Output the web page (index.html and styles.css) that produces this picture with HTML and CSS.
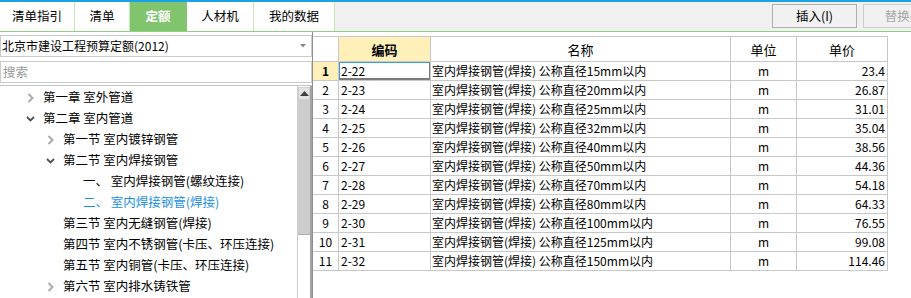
FILE: index.html
```html
<!DOCTYPE html>
<html lang="zh-CN">
<head>
<meta charset="utf-8">
<title>定额</title>
<link rel="stylesheet" href="styles.css">
</head>
<body>
<div class="topline"></div>
<div class="toolbar">
  <div class="tab w1">清单指引</div>
  <div class="tab w2">清单</div>
  <div class="tab w3 active">定额</div>
  <div class="tab w4">人材机</div>
  <div class="tab w5">我的数据</div>
  <div class="btns">
    <div class="btn">插入(I)</div>
    <div class="btn disabled">替换(R)</div>
  </div>
</div>
<div class="main">
  <div class="left">
    <div class="combo">
      <span class="combo-text">北京市建设工程预算定额(2012)</span>
      <svg class="combo-arrow" width="6" height="4" viewBox="0 0 6 4"><polygon points="0,0 6,0 3,3.5" fill="#8a8a8a"/></svg>
    </div>
    <div class="search">搜索</div>
    <div class="tree">
      <div class="tree-list">
        <div class="node l1"><span class="arrow"><svg class="chev-r" width="7" height="10" viewBox="0 0 7 10"><polyline points="1.5,1 5.5,5 1.5,9" fill="none" stroke="#ababab" stroke-width="2"/></svg></span>第一章 室外管道</div>
        <div class="node l1"><span class="arrow"><svg class="chev-d" width="9" height="6" viewBox="0 0 9 6"><polyline points="1,1 4.5,4.5 8,1" fill="none" stroke="#505050" stroke-width="1.8"/></svg></span>第二章 室内管道</div>
        <div class="node l2"><span class="arrow"><svg class="chev-r" width="7" height="10" viewBox="0 0 7 10"><polyline points="1.5,1 5.5,5 1.5,9" fill="none" stroke="#ababab" stroke-width="2"/></svg></span>第一节 室内镀锌钢管</div>
        <div class="node l2"><span class="arrow"><svg class="chev-d" width="9" height="6" viewBox="0 0 9 6"><polyline points="1,1 4.5,4.5 8,1" fill="none" stroke="#505050" stroke-width="1.8"/></svg></span>第二节 室内焊接钢管</div>
        <div class="node l3">一、 室内焊接钢管(螺纹连接)</div>
        <div class="node l3 current">二、 室内焊接钢管(焊接)</div>
        <div class="node l2"><span class="arrow"></span>第三节 室内无缝钢管(焊接)</div>
        <div class="node l2"><span class="arrow"></span>第四节 室内不锈钢管(卡压、环压连接)</div>
        <div class="node l2"><span class="arrow"></span>第五节 室内铜管(卡压、环压连接)</div>
        <div class="node l2"><span class="arrow"><svg class="chev-r" width="7" height="10" viewBox="0 0 7 10"><polyline points="1.5,1 5.5,5 1.5,9" fill="none" stroke="#ababab" stroke-width="2"/></svg></span>第六节 室内排水铸铁管</div>
      </div>
      <div class="vscroll">
        <div class="sb-up"><svg width="9" height="5" viewBox="0 0 9 5"><polygon points="0,5 9,5 4.5,0" fill="#404040"/></svg></div>
        <div class="sb-thumb"></div>
        <div class="sb-track"></div>
      </div>
    </div>
  </div>
  <div class="right">
    <table class="grid">
      <colgroup>
        <col class="c-no"><col class="c-code"><col class="c-name"><col class="c-unit"><col class="c-price">
      </colgroup>
      <thead>
        <tr>
          <th></th>
          <th class="hl">编码</th>
          <th>名称</th>
          <th>单位</th>
          <th>单价</th>
        </tr>
      </thead>
      <tbody>
        <tr><td class="no cur">1</td><td class="code sel">2-22</td><td class="name">室内焊接钢管(焊接) 公称直径15mm以内</td><td class="unit">m</td><td class="price">23.4</td></tr>
        <tr><td class="no">2</td><td class="code">2-23</td><td class="name">室内焊接钢管(焊接) 公称直径20mm以内</td><td class="unit">m</td><td class="price">26.87</td></tr>
        <tr><td class="no">3</td><td class="code">2-24</td><td class="name">室内焊接钢管(焊接) 公称直径25mm以内</td><td class="unit">m</td><td class="price">31.01</td></tr>
        <tr><td class="no">4</td><td class="code">2-25</td><td class="name">室内焊接钢管(焊接) 公称直径32mm以内</td><td class="unit">m</td><td class="price">35.04</td></tr>
        <tr><td class="no">5</td><td class="code">2-26</td><td class="name">室内焊接钢管(焊接) 公称直径40mm以内</td><td class="unit">m</td><td class="price">38.56</td></tr>
        <tr><td class="no">6</td><td class="code">2-27</td><td class="name">室内焊接钢管(焊接) 公称直径50mm以内</td><td class="unit">m</td><td class="price">44.36</td></tr>
        <tr><td class="no">7</td><td class="code">2-28</td><td class="name">室内焊接钢管(焊接) 公称直径70mm以内</td><td class="unit">m</td><td class="price">54.18</td></tr>
        <tr><td class="no">8</td><td class="code">2-29</td><td class="name">室内焊接钢管(焊接) 公称直径80mm以内</td><td class="unit">m</td><td class="price">64.33</td></tr>
        <tr><td class="no">9</td><td class="code">2-30</td><td class="name">室内焊接钢管(焊接) 公称直径100mm以内</td><td class="unit">m</td><td class="price">76.55</td></tr>
        <tr><td class="no">10</td><td class="code">2-31</td><td class="name">室内焊接钢管(焊接) 公称直径125mm以内</td><td class="unit">m</td><td class="price">99.08</td></tr>
        <tr><td class="no">11</td><td class="code">2-32</td><td class="name">室内焊接钢管(焊接) 公称直径150mm以内</td><td class="unit">m</td><td class="price">114.46</td></tr>
      </tbody>
    </table>
  </div>
</div>
</body>
</html>
```
FILE: styles.css
```css
* { box-sizing: border-box; }
html, body { margin: 0; padding: 0; }
body {
  width: 911px;
  height: 298px;
  overflow: hidden;
  background: #fff;
  font-family: "Noto Sans CJK SC", "Noto Sans", sans-serif;
  color: #000;
}

.topline { height: 2px; background: #1ba1e6; }

.toolbar {
  display: flex;
  height: 30px;
  background: #f0f0f0;
  border-bottom: 1px solid #8fd07e;
}
.tab {
  display: flex;
  align-items: center;
  justify-content: center;
  background: #fff;
  border-right: 1px solid #c2e8b6;
  font-size: 12.5px;
  line-height: 1;
  flex-shrink: 0;
}
.w1 { width: 75px; }
.w2 { width: 55px; }
.w3 { width: 57px; }
.w4 { width: 67px; }
.w5 { width: 81px; }
.tab.active {
  background: #80c56d;
  color: #fff;
  font-weight: bold;
  border-right-color: #80c56d;
}

.btns {
  margin-left: auto;
  width: 139px;
  display: flex;
  gap: 6px;
  overflow: hidden;
  padding-top: 2px;
}
.btn {
  flex: 0 0 85px;
  height: 24px;
  border: 1px solid #adadad;
  background: #f1f1f1;
  display: flex;
  align-items: center;
  justify-content: center;
  font-size: 12.5px;
  line-height: 1;
}
.btn.disabled { color: #a6a6a6; border-color: #cdcdcd; }

.main { display: flex; height: 266px; }

.left {
  width: 312px;
  flex-shrink: 0;
  display: flex;
  flex-direction: column;
  padding-top: 3px;
}
.combo {
  height: 22px;
  border: 1px solid #cbcbcb;
  display: flex;
  align-items: center;
  padding-left: 1px;
  padding-right: 5px;
  font-size: 12px;
  line-height: 1;
}
.combo-text { flex: 1; }
.search {
  margin-top: 4px;
  height: 22px;
  border: 1px solid #cbcbcb;
  display: flex;
  align-items: center;
  padding-left: 2px;
  font-size: 12.5px;
  line-height: 1;
  color: #9a9a9a;
}
.tree {
  margin-top: 2px;
  flex: 1;
  border-top: 1px solid #c3c3c3;
  display: flex;
  min-height: 0;
}
.tree-list { flex: 1; padding-top: 1px; overflow: hidden; }
.node {
  height: 21px;
  display: flex;
  align-items: center;
  font-size: 12.5px;
  line-height: 1;
  white-space: nowrap;
}
.l1 { padding-left: 25px; }
.l2 { padding-left: 45px; }
.l3 { padding-left: 83px; }
.node.current { color: #1a8fe4; }
.arrow { flex: 0 0 18px; display: flex; align-items: center; }
.chev-r { margin-left: 2px; }
.chev-d { margin-left: 1px; }

.vscroll {
  width: 15px;
  flex-shrink: 0;
  display: flex;
  flex-direction: column;
  border-left: 1px solid #cfcfcf;
  border-right: 2px solid #a3a3a3;
  padding-top: 1px;
}
.sb-up {
  height: 13px;
  background: #e4e4e4;
  border: 1px solid #cfcfcf;
  display: flex;
  align-items: center;
  justify-content: center;
}
.sb-thumb { height: 135px; background: #cdcdcd; border-bottom: 1px solid #b0b0b0; }
.sb-track { flex: 1; background: #fff; }

.right {
  flex: 1;
  border-left: 1px solid #8e8e8e;
  padding-top: 4px;
  background: #fff;
}
.grid {
  border-collapse: separate;
  border-spacing: 0;
  table-layout: fixed;
  width: 575px;
  font-size: 12px;
  line-height: 1;
}
.c-no { width: 26px; }
.c-code { width: 92px; }
.c-name { width: 300px; }
.c-unit { width: 66px; }
.c-price { width: 91px; }

.grid th {
  height: 26px;
  border-top: 1px solid #c8c8c8;
  border-right: 1px solid #c8c8c8;
  border-bottom: 1px solid #c8c8c8;
  font-weight: normal;
  font-size: 13px;
  text-align: center;
  padding: 0;
  background: #fff;
}
.grid th.hl { background: #ffefb9; font-weight: bold; }
.grid td {
  height: 19px;
  border-right: 1px solid #c8c8c8;
  border-bottom: 1px solid #c8c8c8;
  padding: 0;
  white-space: nowrap;
  overflow: hidden;
}
.grid td.no { text-align: center; }
.grid td.no.cur { background: #ffefb9; font-weight: bold; }
.grid td.code { padding-left: 2px; }
.grid td.name { padding-left: 1px; }
.grid td.unit { text-align: center; }
.grid td.price { text-align: right; padding-right: 2px; }
.grid td.sel { position: relative; }
.grid td.sel::after {
  content: "";
  position: absolute;
  left: -1px;
  top: -1px;
  right: -1px;
  bottom: 0;
  border-top: 2px solid #3b9fdc;
  border-left: 2px solid #3b9fdc;
  border-right: 2px solid #7b7b7b;
  border-bottom: 2px solid #7b7b7b;
}
```
